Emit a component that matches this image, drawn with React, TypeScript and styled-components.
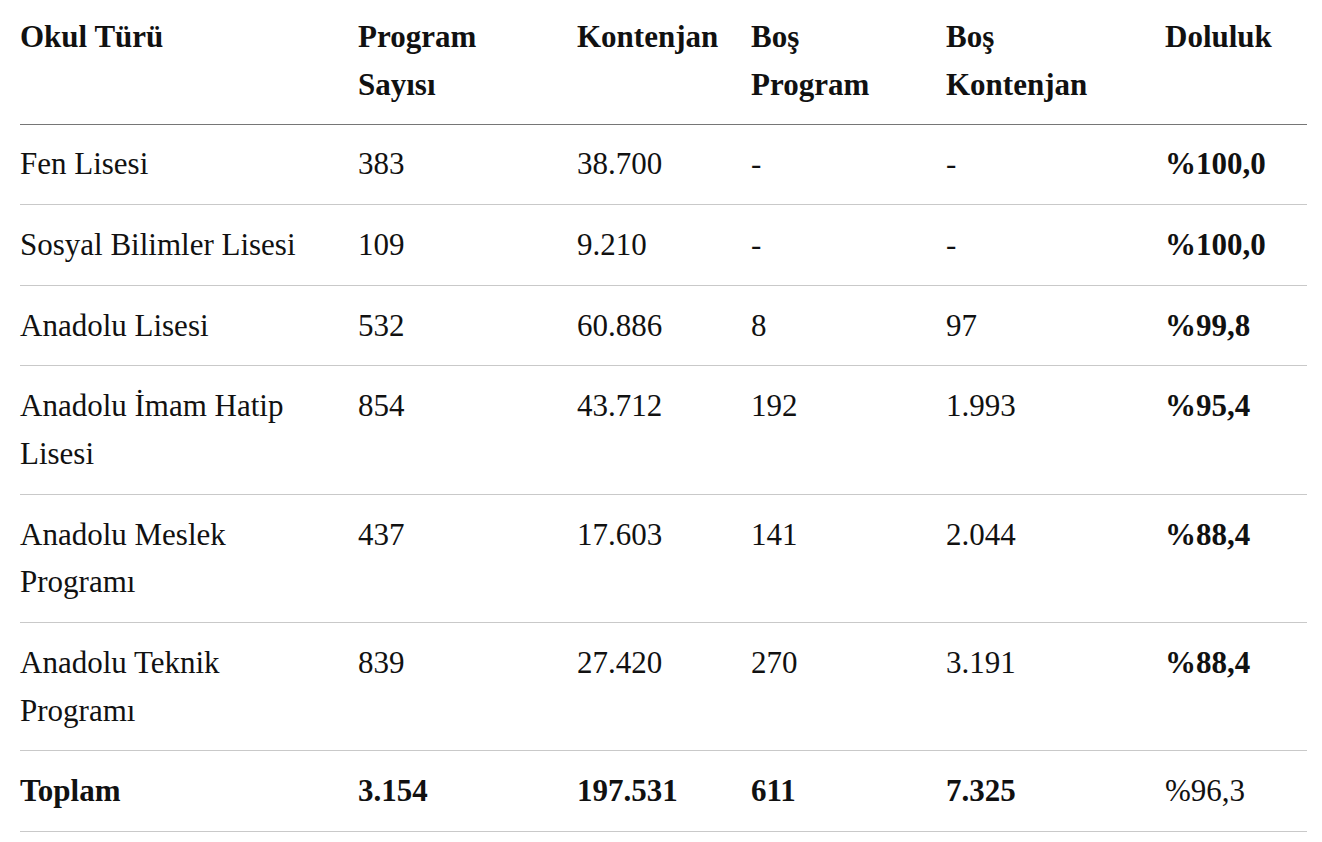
import React from "react";
import styled, { createGlobalStyle } from "styled-components";

const GlobalStyle = createGlobalStyle`
  html, body {
    margin: 0;
    padding: 0;
    background: #ffffff;
  }
  body {
    font-family: "Liberation Serif", "Times New Roman", serif;
    color: #111111;
  }
`;

const Page = styled.div`
  padding: 0 15px 0 20px;
`;

const Table = styled.table`
  width: 1287px;
  border-collapse: collapse;
  table-layout: fixed;
  font-family: "Liberation Serif", "Times New Roman", serif;
  font-size: 31px;
  line-height: 47.8px;
  color: #111111;
`;

const HeadCell = styled.th`
  text-align: left;
  vertical-align: top;
  font-weight: 700;
  padding: 13px 24px 15px 0;
  border-bottom: 1px solid #767676;
`;

const Cell = styled.td<{ $bold?: boolean }>`
  text-align: left;
  vertical-align: top;
  font-weight: ${(p) => (p.$bold ? 700 : 400)};
  padding: 15.9px 24px 15.9px 0;
  border-bottom: 1px solid #c9c9c9;
`;

type Row = {
  name: string;
  programs: string;
  quota: string;
  emptyPrograms: string;
  emptyQuota: string;
  fill: string;
};

const rows: Row[] = [
  { name: "Fen Lisesi", programs: "383", quota: "38.700", emptyPrograms: "-", emptyQuota: "-", fill: "%100,0" },
  { name: "Sosyal Bilimler Lisesi", programs: "109", quota: "9.210", emptyPrograms: "-", emptyQuota: "-", fill: "%100,0" },
  { name: "Anadolu Lisesi", programs: "532", quota: "60.886", emptyPrograms: "8", emptyQuota: "97", fill: "%99,8" },
  { name: "Anadolu İmam Hatip Lisesi", programs: "854", quota: "43.712", emptyPrograms: "192", emptyQuota: "1.993", fill: "%95,4" },
  { name: "Anadolu Meslek Programı", programs: "437", quota: "17.603", emptyPrograms: "141", emptyQuota: "2.044", fill: "%88,4" },
  { name: "Anadolu Teknik Programı", programs: "839", quota: "27.420", emptyPrograms: "270", emptyQuota: "3.191", fill: "%88,4" },
];

const widths = [338, 219, 174, 195, 219, 142];

export default function App() {
  return (
    <>
      <GlobalStyle />
      <Page>
        <Table>
          <colgroup>
            {widths.map((w, i) => (
              <col key={i} style={{ width: w }} />
            ))}
          </colgroup>
          <thead>
            <tr>
              <HeadCell>Okul Türü</HeadCell>
              <HeadCell>Program Sayısı</HeadCell>
              <HeadCell>Kontenjan</HeadCell>
              <HeadCell>Boş Program</HeadCell>
              <HeadCell>Boş Kontenjan</HeadCell>
              <HeadCell>Doluluk</HeadCell>
            </tr>
          </thead>
          <tbody>
            {rows.map((r) => (
              <tr key={r.name}>
                <Cell>{r.name}</Cell>
                <Cell>{r.programs}</Cell>
                <Cell>{r.quota}</Cell>
                <Cell>{r.emptyPrograms}</Cell>
                <Cell>{r.emptyQuota}</Cell>
                <Cell $bold>{r.fill}</Cell>
              </tr>
            ))}
            <tr>
              <Cell $bold>Toplam</Cell>
              <Cell $bold>3.154</Cell>
              <Cell $bold>197.531</Cell>
              <Cell $bold>611</Cell>
              <Cell $bold>7.325</Cell>
              <Cell>%96,3</Cell>
            </tr>
          </tbody>
        </Table>
      </Page>
    </>
  );
}
